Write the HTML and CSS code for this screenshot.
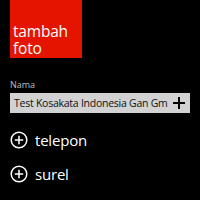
FILE: index.html
```html
<!DOCTYPE html>
<html>
<head>
<meta charset="utf-8">
<link rel="stylesheet" href="styles.css">
</head>
<body>
<div class="page">
  <div class="photo"><div class="photo-text">tambah</div><div class="photo-text">foto</div></div>
  <div class="label">Nama</div>
  <div class="field">
    <span class="field-text">Test Kosakata Indonesia Gan Gm</span>
    <svg class="plus" width="14" height="14" viewBox="0 0 14 14"><path d="M7 1V13M1 7H13" stroke="#000" stroke-width="2"/></svg>
  </div>
  <div class="row">
    <svg class="circ" width="18" height="18" viewBox="0 0 18 18"><circle cx="9" cy="9" r="7.8" fill="none" stroke="#fff" stroke-width="1.5"/><path d="M9 4.8V13.2M4.8 9H13.2" stroke="#fff" stroke-width="1.5"/></svg>
    <span class="row-text">telepon</span>
  </div>
  <div class="row">
    <svg class="circ" width="18" height="18" viewBox="0 0 18 18"><circle cx="9" cy="9" r="7.8" fill="none" stroke="#fff" stroke-width="1.5"/><path d="M9 4.8V13.2M4.8 9H13.2" stroke="#fff" stroke-width="1.5"/></svg>
    <span class="row-text">surel</span>
  </div>
</div>
</body>
</html>
```

FILE: styles.css
```css
html, body {
  margin: 0;
  padding: 0;
  background: #000;
  width: 200px;
  height: 200px;
  overflow: hidden;
}
.page {
  display: flex;
  flex-direction: column;
  padding: 0 10px;
  font-family: "Open Sans", "Noto Sans", sans-serif;
  color: #fff;
}
.photo {
  width: 72px;
  height: 58px;
  background: #e51400;
  display: flex;
  flex-direction: column;
  justify-content: flex-end;
  box-sizing: border-box;
  padding: 0 0 1px 3px;
}
.photo-text {
  font-size: 15.5px;
  line-height: 17px;
  height: 17px;
  letter-spacing: -0.2px;
}
.label {
  margin-top: 20px;
  font-size: 9px;
  line-height: 13px;
  color: #bdbdbd;
}
.field {
  margin-top: 2px;
  height: 20px;
  background: #d2d2d2;
  display: flex;
  align-items: center;
  justify-content: space-between;
  padding: 0 4px 0 4px;
  white-space: nowrap;
}
.field-text {
  font-size: 10.5px;
  line-height: 20px;
  color: #111;
  letter-spacing: -0.25px;
}
.plus {
  display: block;
  flex: none;
}
.row {
  display: flex;
  align-items: center;
  gap: 7px;
  height: 20px;
  margin-top: 17px;
}
.row + .row {
  margin-top: 14px;
}
.circ {
  display: block;
}
.row-text {
  font-size: 15px;
  letter-spacing: -0.2px;
  line-height: 20px;
}
```
